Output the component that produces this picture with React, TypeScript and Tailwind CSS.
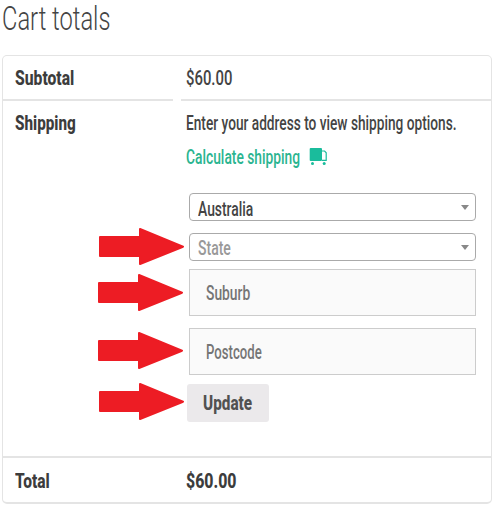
import React, { useLayoutEffect, useRef, useState } from 'react';

interface FitTextProps {
    width: number;
    className?: string;
    children: React.ReactNode;
}

// Condenses the text horizontally so it fills exactly `width` pixels
const FitText: React.FC<FitTextProps> = ({ width, className = '', children }) => {
    const ref = useRef<HTMLSpanElement>(null);
    const [scale, setScale] = useState(0.75);

    useLayoutEffect(() => {
        if (ref.current) {
            setScale(width / ref.current.offsetWidth);
        }
    }, [width]);

    return (
        <span className={`block whitespace-nowrap ${className}`} style={{ width }}>
            <span ref={ref} className="inline-block origin-left" style={{ transform: `scaleX(${scale})` }}>
                {children}
            </span>
        </span>
    );
};

const Arrow: React.FC<{ className: string }> = ({ className }) => (
    <svg className={`absolute ${className}`} width="85" height="38" viewBox="0 0 85 38" fill="#ed1c24" stroke="#ed1c24" strokeWidth="2" strokeLinejoin="round">
        <path d="M1 10H41V2L84 19.7L41 37V29H1Z" />
    </svg>
);

const TruckIcon: React.FC = () => (
    <svg className="-mt-0.5" width="18" height="18" viewBox="0 0 18 18" fill="#1abc9c">
        <rect x="0.7" y="0" width="12.3" height="13" rx="1" />
        <path d="M13 3H15.6L17.2 4.8V12.4H13" fill="none" stroke="#1abc9c" strokeWidth="1.2" />
        <circle cx="3.5" cy="15.6" r="1.5" />
        <circle cx="15.2" cy="15.6" r="1.5" />
    </svg>
);

interface SelectBoxProps {
    label: string;
    width: number;
    className?: string;
}

const SelectBox: React.FC<SelectBoxProps> = ({ label, width, className = '' }) => (
    <div className="flex h-7 items-center justify-between rounded border border-[#aaa] bg-white pr-1.5 pl-2">
        <FitText width={width} className={`leading-7 ${className}`}>{label}</FitText>
        <svg width="8" height="5" viewBox="0 0 8 5" fill="#888">
            <path d="M0 0H8L4 5Z" />
        </svg>
    </div>
);

const InputBox: React.FC<{ label: string; width: number }> = ({ label, width }) => (
    <div className="flex h-[47px] items-center border border-[#ccc] bg-[#fafafa] pl-4">
        <FitText width={width} className="pt-[3px] text-[#757575]">{label}</FitText>
    </div>
);

const App: React.FC = () => {
    return (
        <div className="h-[508px] w-[496px] overflow-hidden bg-white pl-0.5 font-['Roboto','Liberation_Sans',sans-serif] text-[19.5px] leading-7 font-medium text-[#444]">
            <h2 className="h-[55px] text-[33px] leading-[38.5px] font-light">
                <FitText width={108.5}>Cart totals</FitText>
            </h2>

            <div className="h-[449px] w-[490px] rounded-[5px] border border-b-2 border-[#e4e4e4]">
                <div className="flex h-[45px] gap-2">
                    <div className="w-[170px] border-b-2 border-[#e4e4e4] pt-[9px] pl-3 font-extrabold text-[#3c3c3c]">
                        <FitText width={59.5}>Subtotal</FitText>
                    </div>
                    <div className="flex-1 border-b-2 border-[#e4e4e4] pt-[9px] pl-[5px]">
                        <FitText width={46.5}>$60.00</FitText>
                    </div>
                </div>

                <div className="flex h-[357px] gap-2 border-b-2 border-[#e4e4e4]">
                    <div className="w-[170px] pt-[9px] pl-3 font-extrabold text-[#3c3c3c]">
                        <FitText width={61}>Shipping</FitText>
                    </div>
                    <div className="flex-1 pt-[9px] pl-[5px]">
                        <FitText width={270.5}>Enter your address to view shipping options.</FitText>
                        <div className="mt-1.5 flex items-center gap-[9px] text-[#2bb590]">
                            <FitText width={114}>Calculate shipping</FitText>
                            <TruckIcon />
                        </div>

                        <div className="mt-[21px] ml-[3px] flex w-[287px] flex-col">
                            <SelectBox label="Australia" width={55.5} className="pt-1.5" />
                            <div className="relative mt-3">
                                <Arrow className="top-[-6px] left-[-90px]" />
                                <SelectBox label="State" width={33} className="pt-1 text-[#999]" />
                            </div>
                            <div className="relative mt-2">
                                <Arrow className="top-[4px] left-[-91px]" />
                                <InputBox label="Suburb" width={44} />
                            </div>
                            <div className="relative mt-3">
                                <Arrow className="top-[3px] left-[-91px]" />
                                <InputBox label="Postcode" width={56} />
                            </div>
                            <div className="relative mt-[9px]">
                                <Arrow className="top-[-2px] left-[-90px]" />
                                <button className="-ml-0.5 flex h-[38px] w-[82px] items-center justify-center rounded-[3px] bg-[#ebe9eb] pt-0.5 font-extrabold text-[#515151]">
                                    <FitText width={49.5}>Update</FitText>
                                </button>
                            </div>
                        </div>
                    </div>
                </div>

                <div className="flex gap-2 pt-2.5 font-extrabold text-[#3c3c3c]">
                    <div className="w-[170px] pl-3">
                        <FitText width={35}>Total</FitText>
                    </div>
                    <div className="flex-1 pl-[5px]">
                        <FitText width={50.5}>$60.00</FitText>
                    </div>
                </div>
            </div>
        </div>
    );
};

export default App;
